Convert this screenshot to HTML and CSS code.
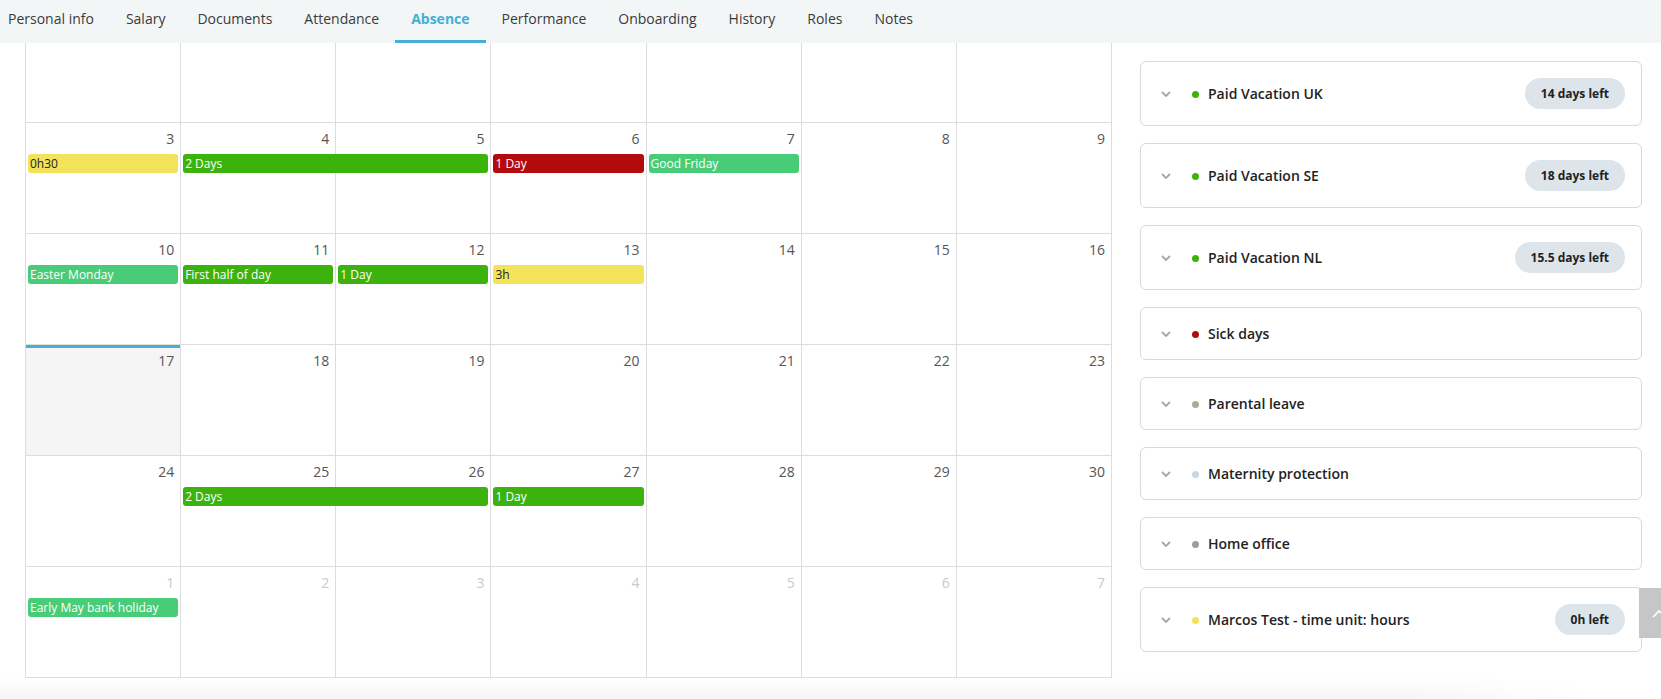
FILE: index.html
```html
<!DOCTYPE html>
<html>
<head>
    <meta charset="UTF-8">
    <title>Absence</title>
    <link rel="stylesheet" href="styles.css">
</head>
<body>
    <nav class="tabs">
        <a class="tab">Personal info</a>
        <a class="tab">Salary</a>
        <a class="tab">Documents</a>
        <a class="tab">Attendance</a>
        <a class="tab active">Absence</a>
        <a class="tab">Performance</a>
        <a class="tab">Onboarding</a>
        <a class="tab">History</a>
        <a class="tab">Roles</a>
        <a class="tab">Notes</a>
    </nav>

    <main class="page">
        <section class="calendar">
            <!-- week of 27 Mar, scrolled under the tabs -->
            <div class="week week-cut">
                <div class="day"></div>
                <div class="day"></div>
                <div class="day"></div>
                <div class="day"></div>
                <div class="day"></div>
                <div class="day"></div>
                <div class="day"></div>
            </div>

            <div class="week">
                <div class="day">3</div>
                <div class="day">4</div>
                <div class="day">5</div>
                <div class="day">6</div>
                <div class="day">7</div>
                <div class="day">8</div>
                <div class="day">9</div>
                <span class="event hours" style="grid-column: 1 / span 1">0h30</span>
                <span class="event vacation" style="grid-column: 2 / span 2">2 Days</span>
                <span class="event sick" style="grid-column: 4 / span 1">1 Day</span>
                <span class="event holiday" style="grid-column: 5 / span 1">Good Friday</span>
            </div>

            <div class="week">
                <div class="day">10</div>
                <div class="day">11</div>
                <div class="day">12</div>
                <div class="day">13</div>
                <div class="day">14</div>
                <div class="day">15</div>
                <div class="day">16</div>
                <span class="event holiday" style="grid-column: 1 / span 1">Easter Monday</span>
                <span class="event vacation" style="grid-column: 2 / span 1">First half of day</span>
                <span class="event vacation" style="grid-column: 3 / span 1">1 Day</span>
                <span class="event hours" style="grid-column: 4 / span 1">3h</span>
            </div>

            <div class="week">
                <div class="day today">17</div>
                <div class="day">18</div>
                <div class="day">19</div>
                <div class="day">20</div>
                <div class="day">21</div>
                <div class="day">22</div>
                <div class="day">23</div>
            </div>

            <div class="week">
                <div class="day">24</div>
                <div class="day">25</div>
                <div class="day">26</div>
                <div class="day">27</div>
                <div class="day">28</div>
                <div class="day">29</div>
                <div class="day">30</div>
                <span class="event vacation" style="grid-column: 2 / span 2">2 Days</span>
                <span class="event vacation" style="grid-column: 4 / span 1">1 Day</span>
            </div>

            <div class="week">
                <div class="day other">1</div>
                <div class="day other">2</div>
                <div class="day other">3</div>
                <div class="day other">4</div>
                <div class="day other">5</div>
                <div class="day other">6</div>
                <div class="day other">7</div>
                <span class="event holiday" style="grid-column: 1 / span 1">Early May bank holiday</span>
            </div>
        </section>

        <aside class="balances">
            <div class="balance">
                <svg class="chevron" width="10" height="6" viewBox="0 0 10 6"><path d="M1 1l4 4 4-4" fill="none" stroke="#a6a6a6" stroke-width="1.8"/></svg>
                <span class="dot green"></span>
                <span class="balance-title">Paid Vacation UK</span>
                <span class="badge">14 days left</span>
            </div>
            <div class="balance">
                <svg class="chevron" width="10" height="6" viewBox="0 0 10 6"><path d="M1 1l4 4 4-4" fill="none" stroke="#a6a6a6" stroke-width="1.8"/></svg>
                <span class="dot green"></span>
                <span class="balance-title">Paid Vacation SE</span>
                <span class="badge">18 days left</span>
            </div>
            <div class="balance">
                <svg class="chevron" width="10" height="6" viewBox="0 0 10 6"><path d="M1 1l4 4 4-4" fill="none" stroke="#a6a6a6" stroke-width="1.8"/></svg>
                <span class="dot green"></span>
                <span class="balance-title">Paid Vacation NL</span>
                <span class="badge">15.5 days left</span>
            </div>
            <div class="balance">
                <svg class="chevron" width="10" height="6" viewBox="0 0 10 6"><path d="M1 1l4 4 4-4" fill="none" stroke="#a6a6a6" stroke-width="1.8"/></svg>
                <span class="dot red"></span>
                <span class="balance-title">Sick days</span>
            </div>
            <div class="balance">
                <svg class="chevron" width="10" height="6" viewBox="0 0 10 6"><path d="M1 1l4 4 4-4" fill="none" stroke="#a6a6a6" stroke-width="1.8"/></svg>
                <span class="dot sage"></span>
                <span class="balance-title">Parental leave</span>
            </div>
            <div class="balance">
                <svg class="chevron" width="10" height="6" viewBox="0 0 10 6"><path d="M1 1l4 4 4-4" fill="none" stroke="#a6a6a6" stroke-width="1.8"/></svg>
                <span class="dot pale"></span>
                <span class="balance-title">Maternity protection</span>
            </div>
            <div class="balance">
                <svg class="chevron" width="10" height="6" viewBox="0 0 10 6"><path d="M1 1l4 4 4-4" fill="none" stroke="#a6a6a6" stroke-width="1.8"/></svg>
                <span class="dot grey"></span>
                <span class="balance-title">Home office</span>
            </div>
            <div class="balance">
                <svg class="chevron" width="10" height="6" viewBox="0 0 10 6"><path d="M1 1l4 4 4-4" fill="none" stroke="#a6a6a6" stroke-width="1.8"/></svg>
                <span class="dot yellow"></span>
                <span class="balance-title">Marcos Test - time unit: hours</span>
                <span class="badge">0h left</span>
            </div>
        </aside>
    </main>

    <div class="page-foot"></div>

    <button class="to-top" title="Back to top">
        <svg width="14" height="8" viewBox="0 0 14 8"><path d="M1 7l6-6 6 6" fill="none" stroke="#ffffff" stroke-width="1.6"/></svg>
    </button>
</body>
</html>
```

FILE: styles.css
```css
body {
    margin: 0;
    padding: 0;
    height: 699px;
    overflow: hidden;
    font-family: "Open Sans", "Noto Sans", Arial, sans-serif;
    background-color: #ffffff;
    color: #333333;
}

/* Tabs across the top */
.tabs {
    display: flex;
    height: 43px;
    padding-left: 8px;
    background-color: #f3f6f7;
    box-sizing: border-box;
}

.tab {
    padding: 0 16px 2px;
    line-height: 38px;
    border-bottom: 3px solid transparent;
    font-size: 14px;
    color: #3a3a3a;
    cursor: pointer;
}

.tab:first-child {
    padding-left: 0;
}

.tab.active {
    color: #40b0d8;
    font-weight: bold;
    border-bottom-color: #45b0d6;
}

.page {
    display: grid;
    grid-template-columns: 1087px 502px;
    column-gap: 28px;
    align-items: start;
    padding-left: 25px;
}

/* Month calendar */
.calendar {
    border-left: 1px solid #dddddd;
}

.week {
    display: grid;
    grid-template-columns: repeat(7, 1fr);
    grid-template-rows: 31px 19px 1fr;
    height: 111px;
}

.week-cut {
    height: 80px;
}

.day {
    grid-row: 1 / -1;
    border-right: 1px solid #dddddd;
    border-bottom: 1px solid #dddddd;
    padding: 6px 6px 0 0;
    text-align: right;
    font-size: 14px;
    line-height: 20px;
    color: #555555;
}

.day:nth-child(1) { grid-column: 1; }
.day:nth-child(2) { grid-column: 2; }
.day:nth-child(3) { grid-column: 3; }
.day:nth-child(4) { grid-column: 4; }
.day:nth-child(5) { grid-column: 5; }
.day:nth-child(6) { grid-column: 6; }
.day:nth-child(7) { grid-column: 7; }

.day.today {
    background-color: #f5f5f5;
    box-shadow: inset 0 3px 0 #45b0d6;
}

.day.other {
    color: #c9c9c9;
}

.event {
    grid-row: 2;
    z-index: 1;
    margin: 0 3px 0 2px;
    padding-left: 2px;
    border-radius: 3px;
    font-size: 12px;
    line-height: 19px;
    color: #ffffff;
    white-space: nowrap;
    overflow: hidden;
}

.event.vacation { background-color: #3cb30c; }
.event.sick { background-color: #b30b0b; }
.event.holiday { background-color: #48cc78; }
.event.hours {
    background-color: #f2e35b;
    color: #222222;
}

/* Balance cards on the right */
.balances {
    display: flex;
    flex-direction: column;
    gap: 17px;
    padding-top: 18px;
}

.balance {
    display: flex;
    align-items: center;
    padding: 16px 16px 16px 20px;
    border: 1px solid #d9d9d9;
    border-radius: 6px;
}

.chevron {
    flex-shrink: 0;
    margin-right: 21px;
}

.dot {
    width: 7px;
    height: 7px;
    border-radius: 50%;
    margin-right: 9px;
    margin-top: 2px;
    flex-shrink: 0;
}

.dot.green { background-color: #3cb30c; }
.dot.red { background-color: #b30b0b; }
.dot.sage { background-color: #a2b190; }
.dot.pale { background-color: #c9d7e2; }
.dot.grey { background-color: #9d9d9d; }
.dot.yellow { background-color: #f2e35b; }

.balance-title {
    flex-grow: 1;
    font-size: 14px;
    font-weight: 600;
    line-height: 19px;
    color: #222222;
}

.badge {
    height: 31px;
    line-height: 31px;
    padding: 0 16px;
    border-radius: 16px;
    background-color: #dde5ea;
    font-size: 12px;
    font-weight: bold;
    color: #222222;
}

/* soft shade under the content, fading out on the right */
.page-foot {
    height: 21px;
    background: linear-gradient(to bottom, #ffffff 0%, #f5f5f5 100%);
    -webkit-mask-image: linear-gradient(to right, #000 85%, transparent 96%);
    mask-image: linear-gradient(to right, #000 85%, transparent 96%);
}

/* Floating back-to-top button at the right edge */
.to-top {
    position: fixed;
    top: 588px;
    right: -20px;
    width: 42px;
    height: 50px;
    padding: 0 0 0 13px;
    border: none;
    background-color: #c6c6c6;
    text-align: left;
    cursor: pointer;
}
```
